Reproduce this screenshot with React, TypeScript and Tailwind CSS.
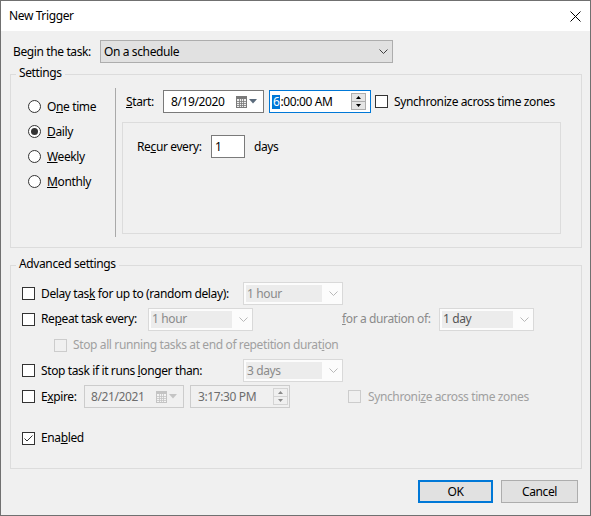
import React from 'react';

const Chevron = ({ disabled }: { disabled?: boolean }) => (
  <svg width="9" height="5" viewBox="0 0 9 5">
    <path d="M0.5 0.5 L4.5 4.5 L8.5 0.5" fill="none" stroke={disabled ? '#b8b8b8' : '#404040'} strokeWidth="1" />
  </svg>
);

function Checkbox({ checked, disabled }: { checked?: boolean; disabled?: boolean }) {
  return (
    <span
      className={`flex h-[13px] w-[13px] shrink-0 items-center justify-center border ${
        disabled ? 'border-[#cccccc] bg-[#f0f0f0]' : 'border-[#333333] bg-white'
      }`}
    >
      {checked && (
        <svg width="11" height="11" viewBox="0 0 11 11">
          <path d="M1.5 5.5 L4 8 L9.5 2.5" fill="none" stroke="#333333" strokeWidth="1" />
        </svg>
      )}
    </span>
  );
}

function Radio({ checked }: { checked?: boolean }) {
  return (
    <span className="flex h-[13px] w-[13px] shrink-0 items-center justify-center rounded-full border border-[#333333] bg-white">
      {checked && <span className="h-[7px] w-[7px] rounded-full bg-[#333333]" />}
    </span>
  );
}

function CalendarIcon({ disabled }: { disabled?: boolean }) {
  const c = disabled ? '#c4c4c4' : '#7a7a7a';
  return (
    <span className="flex items-center gap-[2px]">
      <svg width="11" height="12" viewBox="0 0 11 12">
        <rect x="0.5" y="0.5" width="10" height="11" fill={disabled ? '#f4f4f4' : '#f0f0f0'} stroke={c} />
        <rect x="1" y="1" width="9" height="2" fill={c} />
        <path d="M1 5.5 H10 M1 7.5 H10 M1 9.5 H10 M3.5 3 V11 M5.5 3 V11 M7.5 3 V11" stroke={c} strokeWidth="0.8" />
      </svg>
      <svg width="8" height="5" viewBox="0 0 8 5">
        <path d="M0 0 H8 L4 4.5 Z" fill={disabled ? '#c4c4c4' : '#5b6b7c'} />
      </svg>
    </span>
  );
}

function Spin({ disabled }: { disabled?: boolean }) {
  const tri = disabled ? '#8a8a8a' : '#000000';
  const box = disabled ? 'border-[#d4d4d4] bg-[#f0f0f0]' : 'border-[#adadad] bg-[#e5e5e5]';
  return (
    <span className="flex flex-col gap-0">
      <span className={`flex h-[9px] w-[15px] items-center justify-center border ${box}`}>
        <svg width="5" height="3" viewBox="0 0 5 3"><path d="M0 3 H5 L2.5 0 Z" fill={tri} /></svg>
      </span>
      <span className={`-mt-px flex h-[9px] w-[15px] items-center justify-center border ${box}`}>
        <svg width="5" height="3" viewBox="0 0 5 3"><path d="M0 0 H5 L2.5 3 Z" fill={tri} /></svg>
      </span>
    </span>
  );
}

function DisabledSelect({ value, width, dark }: { value: string; width: string; dark?: boolean }) {
  return (
    <div className={`flex h-[23px] ${width} shrink-0 items-center border border-[#d9d9d9] bg-[#fcfcfc] pl-[2px] pr-[4px]`}>
      <div className={`flex h-[17px] flex-1 items-center bg-[#ececec] pl-[1px] ${dark ? 'text-[#555555]' : 'text-[#8a8a8a]'}`}>
        {value}
      </div>
      <div className="ml-[7px]">
        <Chevron disabled />
      </div>
    </div>
  );
}

function GroupBox({ title, className, children }: { title: string; className: string; children: React.ReactNode }) {
  return (
    <div className={`relative ml-[9px] w-[572px] border border-[#dcdcdc] ${className}`}>
      <span className="absolute -top-[10px] left-[5px] bg-[#f0f0f0] px-[3px] leading-[16px]">{title}</span>
      {children}
    </div>
  );
}

export default function App() {
  return (
    <div className="flex h-[516px] w-[591px] flex-col border border-[#707070] bg-[#f0f0f0] font-['Noto_Sans',sans-serif] text-[12px] leading-[16px] tracking-[-0.38px] text-black">
      {/* title bar */}
      <div className="flex h-[30px] shrink-0 items-center justify-between bg-white pl-[8px] pr-[9px]">
        <span>New Trigger</span>
        <svg width="11" height="11" viewBox="0 0 11 11">
          <path d="M0.5 0.5 L10.5 10.5 M10.5 0.5 L0.5 10.5" stroke="#000" strokeWidth="1" />
        </svg>
      </div>

      {/* begin the task */}
      <div className="ml-[12px] mt-[9px] flex items-center">
        <span className="w-[87px]">Begin the task:</span>
        <div className="flex h-[23px] w-[293px] items-center justify-between border border-[#adadad] bg-[#e1e1e1] pl-[3px] pr-[4px]">
          <span>On a schedule</span>
          <Chevron />
        </div>
      </div>

      <GroupBox title="Settings" className="mt-[11px] h-[174px]">
        <div className="flex">
          <div className="flex w-[104px] flex-col pl-[17px] pt-[19px]">
            {[
              ['O', 'n', 'e time', false],
              ['', 'D', 'aily', true],
              ['', 'W', 'eekly', false],
              ['', 'M', 'onthly', false],
            ].map(([a, u, b, c]) => (
              <div key={String(u)} className="flex h-[25px] items-center gap-[6px]">
                <Radio checked={Boolean(c)} />
                <span>
                  {a}
                  <u>{u}</u>
                  {b}
                </span>
              </div>
            ))}
          </div>
          <div className="mt-[13px] h-[149px] w-px bg-[#a9a9a9]" />
          <div className="flex flex-col pt-[15px]">
            <div className="ml-[10px] flex h-[23px] items-center">
              <span className="w-[37px]">
                <u>S</u>tart:
              </span>
              <div className="flex h-[23px] w-[101px] items-center justify-between border border-[#7a7a7a] bg-white pl-[7px] pr-[6px]">
                <span>8/19/2020</span>
                <CalendarIcon />
              </div>
              <div className="ml-[5px] flex h-[23px] w-[102px] items-center justify-between border border-[#0078d7] bg-white pl-[2px] pr-[4px]">
                <span className="flex items-center">
                  <span className="flex h-[14px] items-center bg-[#0078d7] px-px text-white">6</span>
                  <span>:00:00 AM</span>
                </span>
                <Spin />
              </div>
              <div className="ml-[4px] flex items-center gap-[6px]">
                <Checkbox />
                <span>Synchronize across time zones</span>
              </div>
            </div>
            <div className="ml-[6px] mt-[9px] h-[112px] w-[439px] border border-[#dcdcdc] pl-[14px] pt-[12px]">
              <div className="flex items-center">
                <span className="w-[74px]">
                  Re<u>c</u>ur every:
                </span>
                <div className="flex h-[23px] w-[34px] items-center border border-[#7a7a7a] bg-white pl-[3px]">1</div>
                <span className="ml-[9px]">days</span>
              </div>
            </div>
          </div>
        </div>
      </GroupBox>

      <GroupBox title="Advanced settings" className="mt-[17px] h-[204px]">
        <div className="flex flex-col pl-[11px] pt-[15px]">
          <div className="flex h-[25px] items-center">
            <Checkbox />
            <span className="ml-[6px] w-[202px]">
              Delay tas<u>k</u> for up to (random delay):
            </span>
            <DisabledSelect value="1 hour" width="w-[100px]" />
          </div>
          <div className="flex h-[26px] items-center">
            <Checkbox />
            <span className="ml-[6px] w-[107px]">
              Re<u>p</u>eat task every:
            </span>
            <DisabledSelect value="1 hour" width="w-[105px]" />
            <span className="ml-[89px] w-[97px] text-[#8a8a8a]">
              <u>f</u>or a duration of:
            </span>
            <DisabledSelect value="1 day" width="w-[95px]" dark />
          </div>
          <div className="flex h-[26px] items-center pl-[32px]">
            <Checkbox disabled />
            <span className="ml-[6px] text-[#a0a0a0]">
              Stop all running tasks at end of repetition durat<u>i</u>on
            </span>
          </div>
          <div className="flex h-[25px] items-center">
            <Checkbox />
            <span className="ml-[6px] w-[202px]">
              Stop task if it runs <u>l</u>onger than:
            </span>
            <DisabledSelect value="3 days" width="w-[100px]" />
          </div>
          <div className="flex h-[27px] items-center">
            <Checkbox />
            <span className="ml-[6px] w-[43px]">
              E<u>x</u>pire:
            </span>
            <div className="flex h-[23px] w-[100px] items-center justify-between border border-[#cccccc] pl-[6px] pr-[6px] text-[#6d6d6d]">
              <span>8/21/2021</span>
              <CalendarIcon disabled />
            </div>
            <div className="ml-[6px] flex h-[23px] w-[100px] items-center justify-between border border-[#cccccc] pl-[7px] pr-[1px] text-[#6d6d6d]">
              <span>3:17:30 PM</span>
              <Spin disabled />
            </div>
            <span className="ml-[58px]">
              <Checkbox disabled />
            </span>
            <span className="ml-[7px] text-[#a0a0a0]">
              Synchroni<u>z</u>e across time zones
            </span>
          </div>
          <div className="mt-[15px] flex h-[26px] items-center">
            <Checkbox checked />
            <span className="ml-[6px]">
              Ena<u>b</u>led
            </span>
          </div>
        </div>
      </GroupBox>

      <div className="mt-[11px] flex justify-end gap-[8px] pr-[12px]">
        <button className="flex h-[23px] w-[75px] items-center justify-center border-2 border-[#0078d7] bg-[#e1e1e1]">OK</button>
        <button className="flex h-[23px] w-[77px] items-center justify-center border border-[#adadad] bg-[#e1e1e1]">Cancel</button>
      </div>
    </div>
  );
}
